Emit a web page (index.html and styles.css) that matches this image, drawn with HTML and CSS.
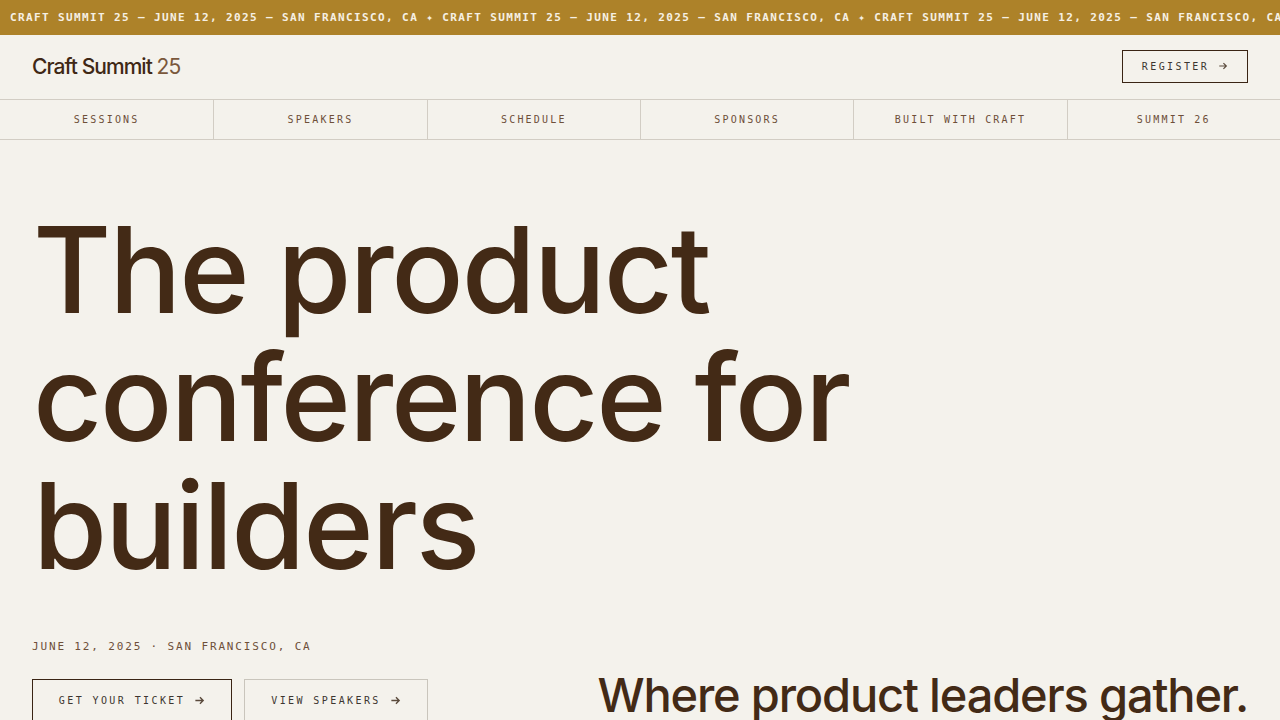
FILE: index.html
```html
<!DOCTYPE html>
<html lang="en">
<head>
<meta charset="utf-8">
<title>Craft Summit 25</title>
<link rel="stylesheet" href="styles.css">
</head>
<body>
<div class="ticker">
  <span>CRAFT SUMMIT 25 — JUNE 12, 2025 — SAN FRANCISCO, CA ✦ CRAFT SUMMIT 25 — JUNE 12, 2025 — SAN FRANCISCO, CA ✦ CRAFT SUMMIT 25 — JUNE 12, 2025 — SAN FRANCISCO, CA ✦ CRAFT SUMMIT 25 — JUNE 12, 2025 — SAN FRANCISCO, CA ✦</span>
</div>
<header class="header">
  <a class="logo" href="#">Craft Summit <span class="logo-num">25</span></a>
  <a class="btn btn-small" href="#">REGISTER
    <svg class="arrow" viewBox="0 0 12 12" width="10" height="10"><path d="M1.5 6h8.5M6.5 2.5 10 6l-3.5 3.5" fill="none" stroke="currentColor" stroke-width="1.4"/></svg>
  </a>
</header>
<nav class="nav">
  <a href="#">SESSIONS</a>
  <a href="#">SPEAKERS</a>
  <a href="#">SCHEDULE</a>
  <a href="#">SPONSORS</a>
  <a href="#">BUILT WITH CRAFT</a>
  <a href="#">SUMMIT 26</a>
</nav>
<main class="hero">
  <h1 class="title">The product<br>conference for<br>builders</h1>
  <div class="hero-bottom">
    <div class="hero-left">
      <p class="meta">JUNE 12, 2025 · SAN FRANCISCO, CA</p>
      <div class="actions">
        <a class="btn btn-primary" href="#">GET YOUR TICKET
          <svg class="arrow" viewBox="0 0 12 12" width="11" height="11"><path d="M1.5 6h8.5M6.5 2.5 10 6l-3.5 3.5" fill="none" stroke="currentColor" stroke-width="1.5"/></svg>
        </a>
        <a class="btn btn-secondary" href="#">VIEW SPEAKERS
          <svg class="arrow" viewBox="0 0 12 12" width="11" height="11"><path d="M1.5 6h8.5M6.5 2.5 10 6l-3.5 3.5" fill="none" stroke="currentColor" stroke-width="1.5"/></svg>
        </a>
      </div>
    </div>
    <h2 class="subtitle">Where product leaders gather.</h2>
  </div>
</main>
</body>
</html>
```

FILE: styles.css
```css
* { box-sizing: border-box; }
html, body { margin: 0; padding: 0; }
body {
  background: #f4f2ec;
  color: #432a16;
  font-family: Inter, "Noto Sans", sans-serif;
  overflow: hidden;
}
a { text-decoration: none; color: inherit; }

.ticker {
  height: 35px;
  background: #ad8229;
  color: #f6f0e4;
  font-family: "DejaVu Sans Mono", monospace;
  font-weight: bold;
  font-size: 11px;
  letter-spacing: 1.38px;
  line-height: 35px;
  white-space: nowrap;
  overflow: hidden;
  padding-left: 10px;
}

.header {
  height: 64px;
  display: flex;
  align-items: center;
  justify-content: space-between;
  padding: 0 32px;
}
.logo {
  font-family: Inter, sans-serif;
  font-weight: 500;
  font-size: 21px;
  letter-spacing: -0.045em;
  color: #3f2815;
  padding-bottom: 2px;
}
.logo-num { color: #7a583c; font-weight: 400; }

.btn {
  display: inline-flex;
  align-items: center;
  justify-content: center;
  gap: 9px;
  font-family: "DejaVu Sans Mono", monospace;
  font-size: 10px;
  letter-spacing: 2.4px;
  color: #3c3630;
  border: 1px solid #3a2414;
}
.btn .arrow { color: #5a4a3c; }
.btn-small {
  width: 126px;
  height: 33px;
  margin-bottom: 2px;
}

.nav {
  display: grid;
  grid-template-columns: repeat(6, 1fr);
  border-top: 1px solid #d2cdc4;
  border-bottom: 1px solid #d2cdc4;
}
.nav a {
  height: 39px;
  display: flex;
  align-items: center;
  justify-content: center;
  font-family: "DejaVu Sans Mono", monospace;
  font-size: 10px;
  letter-spacing: 2.2px;
  color: #6e4f39;
  border-left: 1px solid #d2cdc4;
}
.nav a:first-child { border-left: none; }

.hero {
  padding: 66px 32px 0 32px;
}
.title {
  margin: 0 0 0 1px;
  font-family: Inter, sans-serif;
  font-weight: 500;
  font-size: 120px;
  line-height: 128px;
  letter-spacing: -0.018em;
  color: #432a16;
}
.hero-bottom {
  display: flex;
  justify-content: space-between;
  align-items: flex-end;
  margin-top: 49px;
}
.meta {
  margin: 0;
  font-family: "DejaVu Sans Mono", monospace;
  font-size: 11px;
  line-height: 16px;
  letter-spacing: 1.85px;
  color: #6e4f39;
}
.actions {
  display: flex;
  gap: 12px;
  margin-top: 24px;
}
.btn-primary { width: 200px; height: 42px; }
.btn-secondary { width: 184px; height: 42px; border-color: #c9c5bc; }

.subtitle {
  margin: 0 0 -2px 0;
  font-family: Inter, sans-serif;
  font-weight: 500;
  font-size: 47px;
  line-height: 56px;
  letter-spacing: -0.025em;
  color: #432a16;
}
```
